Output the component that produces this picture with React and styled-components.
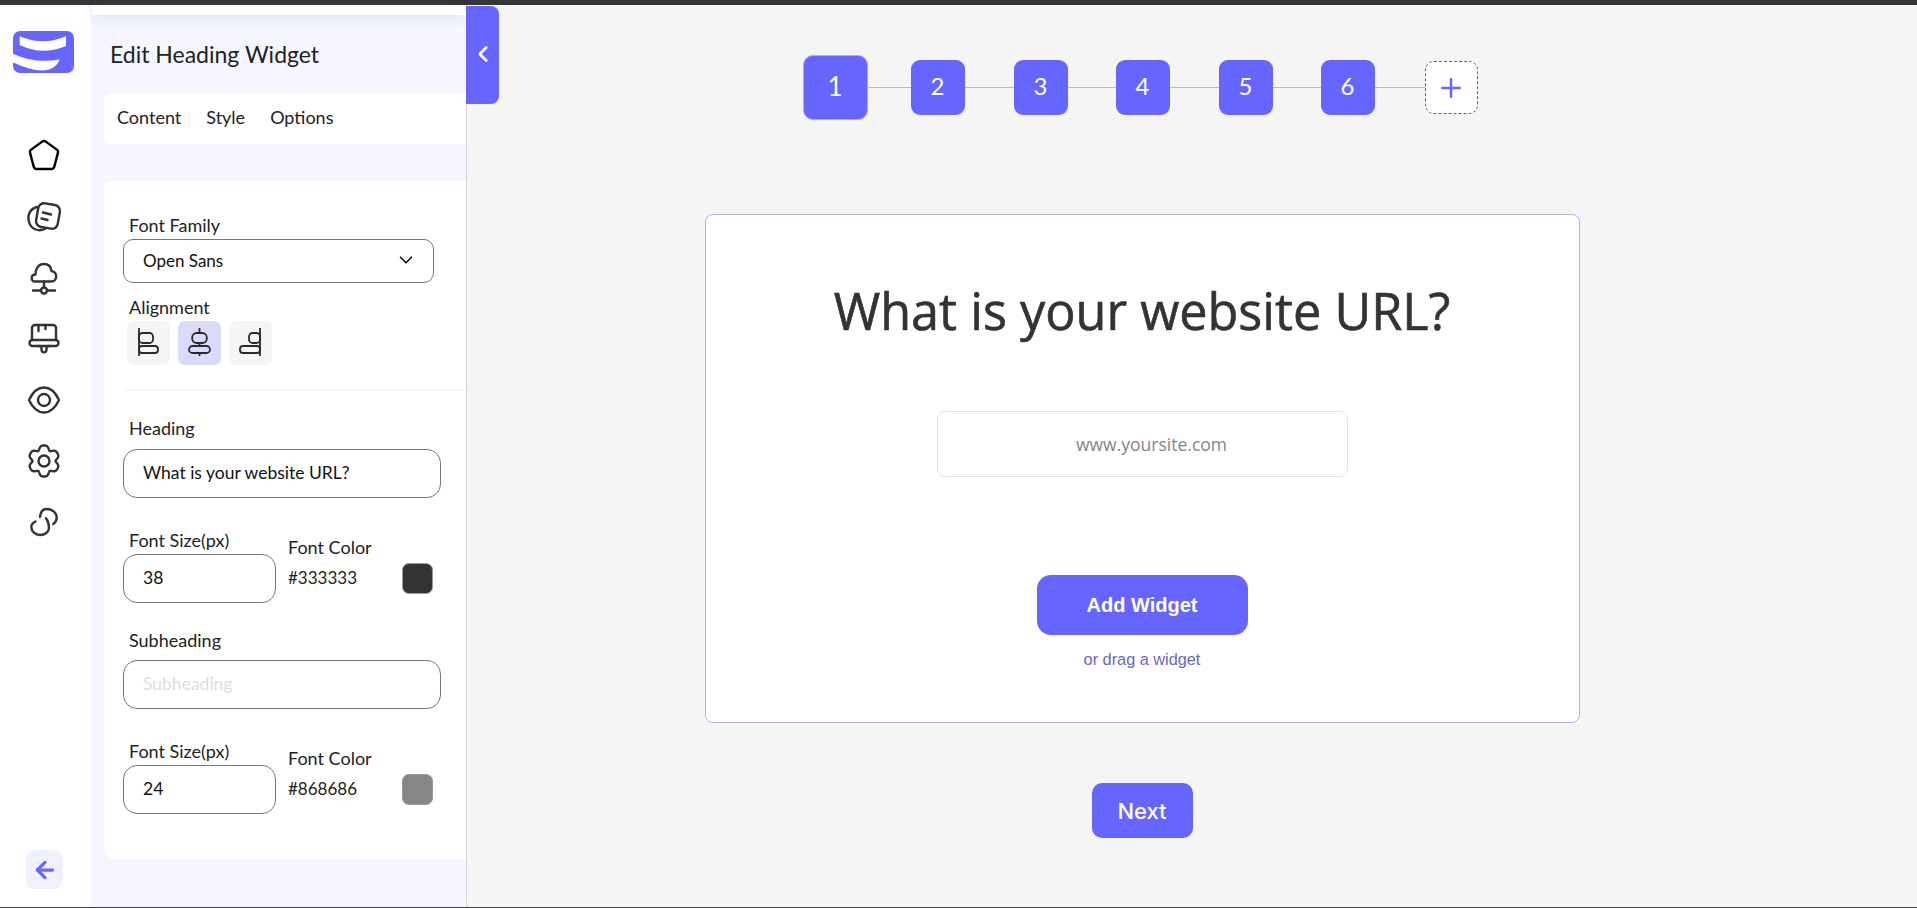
import React from "react";
import styled, { createGlobalStyle } from "styled-components";
import { ChevronDown, ChevronLeft, Plus, ArrowLeft } from "lucide-react";

const purple = "#6666ff";
const uiFont = `Lato, "Noto Sans", sans-serif`;

const Global = createGlobalStyle`
  * { box-sizing: border-box; }
  html, body { margin: 0; height: 100%; overflow: hidden; }
  body { font-family: ${uiFont}; color: #222; }
  #root { height: 100%; }
`;

const Page = styled.div`
  width: 100%;
  height: 100vh;
  display: flex;
  flex-direction: column;
  border-top: 5px solid #35363a;
  border-bottom: 1px solid #444;
  background: #f5f5f5;
`;
const Body = styled.div`
  flex: 1;
  display: flex;
  min-height: 0;
`;

/* left icon rail */
const Rail = styled.nav`
  width: 90px;
  flex: none;
  background: #fff;
  display: flex;
  flex-direction: column;
  align-items: center;
  padding: 26px 3px 18px 0;
`;
const LogoWrap = styled.div`
  width: 61px;
  height: 42px;
  margin-bottom: 65px;
`;
const NavList = styled.div`
  display: flex;
  flex-direction: column;
  gap: 25px;
`;
const NavIcon = styled.div`
  width: 36px;
  height: 36px;
  display: flex;
  align-items: center;
  justify-content: center;
  color: #333;
  svg { display: block; flex: none; }
`;
const BackBtn = styled.button`
  margin: auto 0 0 2px;
  width: 37px;
  height: 39px;
  border: 0;
  padding: 0;
  border-radius: 9px;
  background: #f1f0ff;
  color: ${purple};
  display: flex;
  align-items: center;
  justify-content: center;
`;

/* settings panel */
const Panel = styled.aside`
  width: 377px;
  flex: none;
  position: relative;
  background: #f5f6ff;
  border-right: 1px solid #d4d6e0;
`;
const TopStrip = styled.div`
  height: 10px;
  margin-left: 2px;
  background: #fff;
  box-shadow: 0 4px 12px rgba(90, 90, 160, 0.12);
`;
const Title = styled.h2`
  margin: 0;
  padding: 0 0 0 20px;
  height: 78px;
  line-height: 78px;
  font-size: 23px;
  font-weight: 400;
  color: #222;
`;
const Tabs = styled.div`
  margin-left: 14px;
  height: 51px;
  background: #fff;
  border-radius: 8px 0 0 8px;
  display: flex;
  align-items: center;
  gap: 25px;
  padding: 0 0 4px 13px;
`;
const Tab = styled.span`
  font-size: 18px;
  color: #222;
`;
const Collapse = styled.button`
  position: absolute;
  top: 1px;
  left: 376px;
  width: 33px;
  height: 98px;
  border: 0;
  padding: 0 0 2px;
  background: ${purple};
  color: #fff;
  border-radius: 0 8px 8px 0;
  display: flex;
  align-items: center;
  justify-content: center;
`;
const FormCard = styled.div`
  margin: 37px 0 0 14px;
  height: 677px;
  background: #fff;
  border-radius: 8px 0 0 8px;
  padding: 35px 0 0 19px;
`;
const Label = styled.div`
  height: 20px;
  line-height: 18px;
  padding-left: ${(p) => p.$indent ?? 6}px;
  margin-top: ${(p) => p.$top ?? 0}px;
  margin-bottom: ${(p) => p.$bottom ?? 3}px;
  font-size: 18px;
  color: #222;
  white-space: nowrap;
`;
const Select = styled.div`
  width: 311px;
  height: 44px;
  border: 1px solid #777;
  border-radius: 10px;
  display: flex;
  align-items: center;
  justify-content: space-between;
  padding: 0 16px 2px 19px;
  font-size: 17px;
  color: #111;
`;
const AlignRow = styled.div`
  display: flex;
  gap: 8px;
  padding-left: 4px;
`;
const AlignBtn = styled.div`
  width: 43px;
  height: 44px;
  border-radius: 7px;
  background: ${(p) => (p.$active ? "#dcdafa" : "#f5f5f5")};
  svg { display: block; }
`;
const Divider = styled.hr`
  margin: 25px 0 0;
  border: 0;
  border-top: 1px solid #f0f0f0;
`;
const TextBox = styled.div`
  width: ${(p) => p.$width}px;
  height: 49px;
  border: 1px solid #777;
  border-radius: 14px;
  display: flex;
  align-items: center;
  padding: 0 0 2px 19px;
  font-size: 17.5px;
  color: ${(p) => (p.$placeholder ? "#dedede" : "#111")};
`;
const SizeRow = styled.div`
  display: flex;
  margin-top: ${(p) => p.$top}px;
`;
const SizeCol = styled.div`
  width: 153px;
`;
const ColorCol = styled.div`
  width: 145px;
  margin-left: 12px;
  padding-top: 7px;
`;
const ColorLine = styled.div`
  display: flex;
  align-items: center;
  justify-content: space-between;
  margin-top: 5px;
`;
const ColorValue = styled.span`
  font-size: 17px;
  color: #222;
  padding-bottom: 2px;
`;
const Swatch = styled.div`
  width: 31px;
  height: 31px;
  border-radius: 7px;
  border: 1px solid #999;
  background: ${(p) => p.$color};
`;

/* main canvas */
const Main = styled.main`
  flex: 1;
  min-width: 0;
  display: flex;
  flex-direction: column;
  align-items: center;
  padding: 50px 100px 0 0;
`;
const Stepper = styled.div`
  display: flex;
  align-items: center;
  height: 65px;
  margin-right: 4px;
`;
const StepLink = styled.div`
  width: ${(p) => p.$w}px;
  height: 1px;
  background: #bbb;
`;
const Step = styled.div`
  width: ${(p) => (p.$current ? 65 : 54)}px;
  height: ${(p) => (p.$current ? 65 : 55)}px;
  border-radius: ${(p) => (p.$current ? 10 : 9)}px;
  background: ${purple};
  border: ${(p) => (p.$current ? "1px solid #a9a9ff" : "0")};
  color: #fff;
  font-size: ${(p) => (p.$current ? 26 : 24)}px;
  padding-bottom: 4px;
  display: flex;
  align-items: center;
  justify-content: center;
`;
const AddStep = styled.div`
  width: 53px;
  height: 53px;
  border-radius: 9px;
  border: 1px dashed #5a56b8;
  background: #fff;
  color: ${purple};
  display: flex;
  align-items: center;
  justify-content: center;
`;
const Card = styled.section`
  width: 875px;
  height: 509px;
  margin-top: 94px;
  background: #fff;
  border: 1px solid #b3b3e8;
  border-radius: 8px;
  display: flex;
  flex-direction: column;
  align-items: center;
  padding-top: 63px;
`;
const Heading = styled.h1`
  margin: 0;
  height: 66px;
  line-height: 66px;
  font-family: "Open Sans", sans-serif;
  font-size: 50.4px;
  font-weight: 400;
  -webkit-text-stroke: 0.6px #333;
  color: #333;
`;
const UrlField = styled.div`
  width: 411px;
  height: 66px;
  margin-top: 67px;
  border: 1px solid #e2e2e2;
  border-radius: 8px;
  display: flex;
  align-items: center;
  justify-content: center;
  padding-left: 19px;
  font-family: "Open Sans", sans-serif;
  font-size: 17.5px;
  color: #868686;
`;
const AddBtn = styled.button`
  width: 211px;
  height: 60px;
  margin-top: 98px;
  border: 0;
  border-radius: 14px;
  background: ${purple};
  color: #fff;
  font-family: "Liberation Sans", sans-serif;
  font-weight: 700;
  font-size: 20px;
`;
const DragHint = styled.div`
  margin-top: 14px;
  font-family: "Liberation Sans", sans-serif;
  font-size: 16.3px;
  line-height: 21px;
  color: #6666cc;
`;
const NextBtn = styled.button`
  width: 101px;
  height: 55px;
  margin-top: 60px;
  border: 0;
  border-radius: 10px;
  background: ${purple};
  color: #fff;
  font-family: Inter, "Liberation Sans", sans-serif;
  font-weight: 500;
  font-size: 22px;
`;

const Logo = () => (
  <svg width="61" height="42" viewBox="0 0 61 42">
    <rect width="61" height="42" rx="7" fill={purple} />
    <path d="M6.7 5.3Q30 15.3 53 5.3V15Q30 25 6.7 14Z" fill="#fff" />
    <path d="M0 22.7Q22 33 46.5 28.5Q44 36 36 38.5Q27 41 16 37.5Q8 35 0 31.5Z" fill="#fff" />
  </svg>
);

const stroke = { fill: "none", stroke: "currentColor", strokeWidth: 2.4, strokeLinecap: "round", strokeLinejoin: "round" };

// six wide lobes with narrow notches, lobes at top and bottom
const gearPath = () => {
  const pts = [];
  for (let i = 0; i < 120; i++) {
    const a = (i / 120) * Math.PI * 2;
    const dip = Math.pow((1 - Math.cos(6 * a)) / 2, 2);
    const r = 15.5 - 4 * dip;
    pts.push(`${(18 + r * Math.sin(a)).toFixed(2)} ${(18 - r * Math.cos(a)).toFixed(2)}`);
  }
  return `M${pts.join("L")}Z`;
};

const HomeIcon = () => (
  <svg width="36" height="36" viewBox="0 0 36 36" {...stroke} style={{ color: "#000" }}>
    <path d="M16.2 3.6a3 3 0 0 1 3.6 0l11 8a3 3 0 0 1 1.1 3.3l-3.6 13.9a3 3 0 0 1-2.9 2.2H10.6a3 3 0 0 1-2.9-2.2L4.1 14.9a3 3 0 0 1 1.1-3.3Z" />
  </svg>
);
const CardsIcon = () => (
  <svg width="36" height="36" viewBox="0 0 36 36" {...stroke}>
    <rect x="11" y="5" width="22" height="24" rx="6" transform="rotate(10 22 17)" />
    <path d="M11 8C4 10 1 16 3 23C5 30 12 33 19 30" />
    <path d="M17 13.5l8 2M15.5 19.5l6 1.5" />
  </svg>
);
const CloudIcon = () => (
  <svg width="36" height="36" viewBox="0 0 36 36" {...stroke}>
    <path d="M9 21.5C4.500 21.5 4.500 14.500 9.500 14.500C9.500 8 13 4 18 4C22.500 4 25 7 25.500 11C31.500 11.500 32 21.500 25 21.500Z" />
    <path d="M18 21.5V27M7 30.5H15M21 30.5H29" />
    <circle cx="18" cy="30.5" r="3" />
  </svg>
);
const BrushIcon = () => (
  <svg width="36" height="36" viewBox="0 0 36 36" {...stroke}>
    <path d="M6 19V7a3 3 0 0 1 3-3H27a3 3 0 0 1 3 3V19" />
    <rect x="3.5" y="19" width="29" height="6" rx="3" />
    <path d="M12 25c3 0 3.5 1 3.5 3c0 4.5 5 4.5 5 0c0-2 .5-3 3.5-3M12.5 4V10M19.5 4V8" />
  </svg>
);
const EyeIcon = () => (
  <svg width="36" height="36" viewBox="0 0 36 36" {...stroke}>
    <path d="M3 18C7 9.5 12 5.5 18 5.5S29 9.5 33 18C29 26.5 24 30.5 18 30.5S7 26.5 3 18Z" />
    <circle cx="18" cy="18" r="6" />
  </svg>
);
const GearIcon = () => (
  <svg width="36" height="36" viewBox="0 0 36 36" {...stroke}>
    <path d={gearPath()} />
    <circle cx="18" cy="18" r="5.5" />
  </svg>
);
const LinkIcon = () => (
  <svg width="36" height="36" viewBox="0 0 36 36" {...stroke}>
    <path d="M14 13C14.500 8 17 5 20.700 5C26.500 5 30.700 9 30.700 13.500C30.700 16.500 29.500 18.500 27.300 20" />
    <path d="M9.500 17.500C6.500 19 5.300 20.500 5.300 23C5.300 27.500 9.500 31 14 31C19 31 23 28 23 24C23 20.500 22 17 20 14.300" />
  </svg>
);

const alignStroke = { fill: "none", stroke: "#2a2a2a", strokeWidth: 1.8 };
const AlignLeft = () => (
  <svg width="43" height="44" viewBox="0 0 43 44" {...alignStroke}>
    <path d="M12 7V35" />
    <rect x="12" y="12" width="14" height="10" rx="3.5" />
    <rect x="12" y="25" width="19" height="7" rx="3" />
  </svg>
);
const AlignCenter = () => (
  <svg width="43" height="44" viewBox="0 0 43 44" {...alignStroke}>
    <path d="M21.5 7V12M21.5 22V25M21.5 32V35" />
    <rect x="14.2" y="12" width="14.6" height="10" rx="4.5" />
    <rect x="11" y="25" width="21" height="7" rx="3.5" />
  </svg>
);
const AlignRight = () => (
  <svg width="43" height="44" viewBox="0 0 43 44" {...alignStroke}>
    <path d="M31 7V35" />
    <rect x="20" y="12" width="11" height="10" rx="3.5" />
    <rect x="11" y="25" width="20" height="7" rx="3" />
  </svg>
);

const SizeBlock = ({ top, size, color }) => (
  <SizeRow $top={top}>
    <SizeCol>
      <Label>Font Size(px)</Label>
      <TextBox $width={153}>{size}</TextBox>
    </SizeCol>
    <ColorCol>
      <Label $indent={0} $bottom={0}>Font Color</Label>
      <ColorLine>
        <ColorValue>{color}</ColorValue>
        <Swatch $color={color} />
      </ColorLine>
    </ColorCol>
  </SizeRow>
);

const steps = [2, 3, 4, 5, 6];
const linkWidth = { 2: 43, 3: 49, 4: 48, 5: 49, 6: 48 };

export default function App() {
  return (
    <Page>
      <Global />
      <Body>
        <Rail>
          <LogoWrap><Logo /></LogoWrap>
          <NavList>
            <NavIcon><HomeIcon /></NavIcon>
            <NavIcon><CardsIcon /></NavIcon>
            <NavIcon><CloudIcon /></NavIcon>
            <NavIcon><BrushIcon /></NavIcon>
            <NavIcon><EyeIcon /></NavIcon>
            <NavIcon><GearIcon /></NavIcon>
            <NavIcon><LinkIcon /></NavIcon>
          </NavList>
          <BackBtn><ArrowLeft size={26} strokeWidth={3} /></BackBtn>
        </Rail>

        <Panel>
          <TopStrip />
          <Title>Edit Heading Widget</Title>
          <Tabs>
            <Tab>Content</Tab>
            <Tab>Style</Tab>
            <Tab>Options</Tab>
          </Tabs>
          <Collapse><ChevronLeft size={26} strokeWidth={2.5} /></Collapse>
          <FormCard>
            <Label>Font Family</Label>
            <Select>
              Open Sans
              <ChevronDown size={22} strokeWidth={1.8} />
            </Select>
            <Label $top={15}>Alignment</Label>
            <AlignRow>
              <AlignBtn><AlignLeft /></AlignBtn>
              <AlignBtn $active><AlignCenter /></AlignBtn>
              <AlignBtn><AlignRight /></AlignBtn>
            </AlignRow>
            <Divider />
            <Label $top={28} $bottom={10}>Heading</Label>
            <TextBox $width={318}>What is your website URL?</TextBox>
            <SizeBlock top={33} size="38" color="#333333" />
            <Label $top={28} $bottom={9}>Subheading</Label>
            <TextBox $width={318} $placeholder>Subheading</TextBox>
            <SizeBlock top={33} size="24" color="#868686" />
          </FormCard>
        </Panel>

        <Main>
          <Stepper>
            <Step $current>1</Step>
            {steps.map((n) => (
              <React.Fragment key={n}>
                <StepLink $w={linkWidth[n]} />
                <Step>{n}</Step>
              </React.Fragment>
            ))}
            <StepLink $w={50} />
            <AddStep><Plus size={30} strokeWidth={2} /></AddStep>
          </Stepper>
          <Card>
            <Heading>What is your website URL?</Heading>
            <UrlField>www.yoursite.com</UrlField>
            <AddBtn>Add Widget</AddBtn>
            <DragHint>or drag a widget</DragHint>
          </Card>
          <NextBtn>Next</NextBtn>
        </Main>
      </Body>
    </Page>
  );
}
